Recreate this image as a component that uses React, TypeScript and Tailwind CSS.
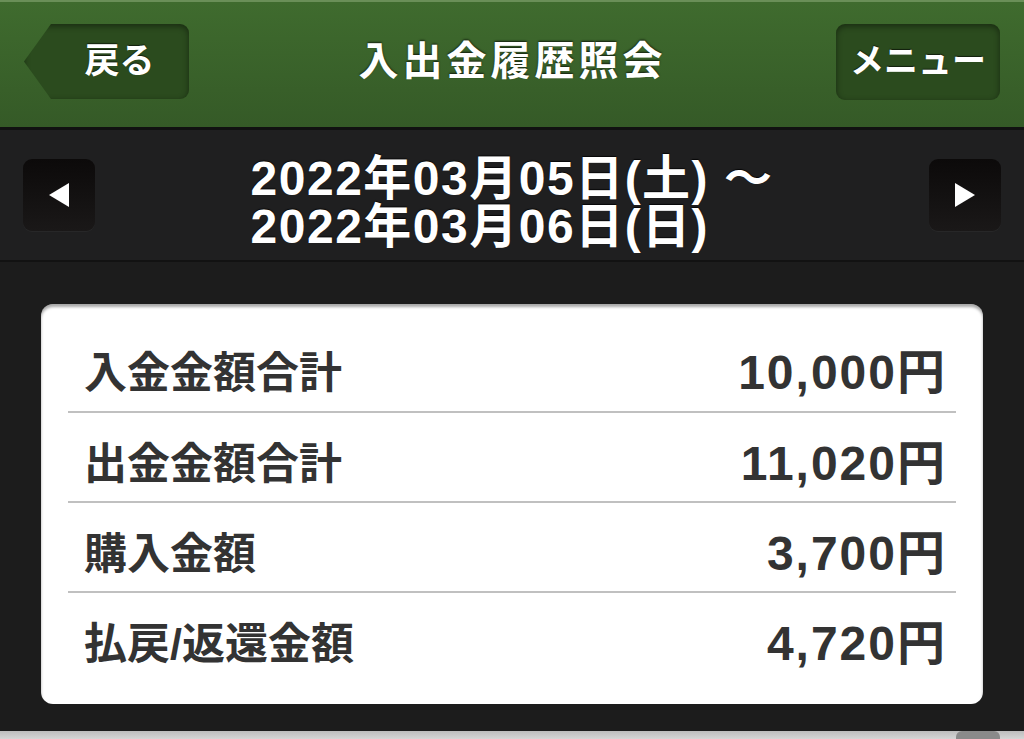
import React from "react";

const font = "font-['Liberation_Sans','Noto_Sans_CJK_JP',sans-serif]";

const rows = [
  { label: "入金金額合計", value: "10,000円" },
  { label: "出金金額合計", value: "11,020円" },
  { label: "購入金額", value: "3,700円" },
  { label: "払戻/返還金額", value: "4,720円" },
];

const Arrow = ({ dir }: { dir: "left" | "right" }) => (
  <button className="w-[72px] h-[72px] rounded-[9px] bg-gradient-to-b from-[#0c0a0a] to-[#1a1818] flex items-center justify-center shadow-[0_1px_0_rgba(255,255,255,0.04)]">
    <svg width="24" height="26" viewBox="0 0 24 26">
      {dir === "left" ? (
        <polygon points="22,1 22,25 2,13" fill="#ffffff" />
      ) : (
        <polygon points="2,1 2,25 22,13" fill="#ffffff" />
      )}
    </svg>
  </button>
);

export default function App() {
  return (
    <div className={`w-[1024px] h-[739px] flex flex-col overflow-hidden bg-[#1c1c1c] ${font}`}>
      {/* header */}
      <div className="h-[130px] shrink-0 flex items-center justify-between px-[24px] bg-gradient-to-b from-[#3f6b2e] to-[#355a27] border-t-[2px] border-[#6a8f58] border-b-[3px] border-b-[#111111]">
        <button className="relative w-[165px] h-[75px] mt-[-6px] rounded-r-[9px] bg-[#2b4b1e] shadow-[inset_0_2px_6px_rgba(0,0,0,0.45)] [clip-path:polygon(27px_0,100%_0,100%_100%,27px_100%,0_50%)] flex items-center justify-center pl-[26px] text-white text-[35px] font-bold [text-shadow:0_-1px_1px_rgba(0,0,0,0.6)]">
          戻る
        </button>
        <div className="text-white text-[40px] font-bold tracking-[4px] mt-[-8px] [text-shadow:0_-1px_2px_rgba(0,0,0,0.7)]">
          入出金履歴照会
        </div>
        <button className="w-[164px] h-[76px] mt-[-6px] rounded-[9px] bg-[#2b4b1e] shadow-[inset_0_2px_6px_rgba(0,0,0,0.45)] flex items-center justify-center text-white text-[34px] font-bold [text-shadow:0_-1px_1px_rgba(0,0,0,0.6)]">
          メニュー
        </button>
      </div>

      {/* date bar */}
      <div className="h-[132px] shrink-0 flex items-center justify-between px-[23px] bg-[#1f1f20] border-b-[2px] border-[#121212]">
        <Arrow dir="left" />
        <div className="text-white text-[48px] font-bold leading-[48px] tracking-[1.5px] mt-[16px] [text-shadow:0_-1px_1px_rgba(0,0,0,0.8)]">
          <div>2022年03月05日(土) ～</div>
          <div>2022年03月06日(日)</div>
        </div>
        <Arrow dir="right" />
      </div>

      {/* card */}
      <div className="flex-1 px-[41px] pt-[42px]">
        <div className="h-[400px] bg-white rounded-[12px] pt-[17px] pb-[21px] shadow-[inset_0_3px_3px_rgba(0,0,0,0.35)]">
          {rows.map((r, i) => (
            <div key={r.label}>
              {i > 0 && <div className="mx-[27px] h-[2px] bg-[#c0c0c0]" />}
              <div className={`${i > 0 ? "h-[88px]" : "h-[90px]"} flex items-center justify-between pl-[43px] pr-[36px] pt-[14px] text-[#333333] font-bold`}>
                <span className="text-[43px]">{r.label}</span>
                <span className="text-[48px] tracking-[2px]">{r.value}</span>
              </div>
            </div>
          ))}
        </div>
      </div>

      {/* bottom bar */}
      <div className="h-[8px] shrink-0 bg-gradient-to-b from-[#bdbdbd] to-[#d6d6d6] flex justify-end pr-[24px]">
        <div className="w-[44px] h-full rounded-t-[6px] bg-[#8a8a8a]" />
      </div>
    </div>
  );
}
